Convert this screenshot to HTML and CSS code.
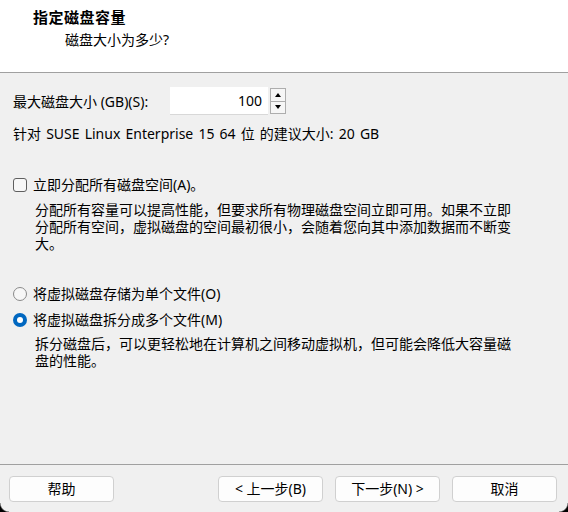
FILE: index.html
```html
<!DOCTYPE html>
<html lang="zh-CN">
<head>
<meta charset="utf-8">
<title>指定磁盘容量</title>
<link rel="stylesheet" href="styles.css">
</head>
<body>
<div class="window">
  <header class="header">
    <div class="title">指定磁盘容量</div>
    <div class="subtitle">磁盘大小为多少?</div>
  </header>
  <main class="content">
    <div class="size-row">
      <label class="size-label">最大磁盘大小 (GB)(S):</label>
      <div class="spin">
        <div class="spin-field">100</div>
        <div class="spin-buttons">
          <div class="spin-btn"><span class="tri up"></span></div>
          <div class="spin-btn"><span class="tri down"></span></div>
        </div>
      </div>
    </div>
    <div class="hint">针对 SUSE Linux Enterprise 15 64 位 的建议大小: 20 GB</div>

    <div class="option check-option">
      <span class="checkbox"></span>
      <span class="opt-text">立即分配所有磁盘空间(A)。</span>
    </div>
    <p class="desc">分配所有容量可以提高性能，但要求所有物理磁盘空间立即可用。如果不立即分配所有空间，虚拟磁盘的空间最初很小，会随着您向其中添加数据而不断变大。</p>

    <div class="option radio-first">
      <span class="radio"></span>
      <span class="opt-text">将虚拟磁盘存储为单个文件(O)</span>
    </div>
    <div class="option radio-second">
      <span class="radio checked"></span>
      <span class="opt-text">将虚拟磁盘拆分成多个文件(M)</span>
    </div>
    <p class="desc desc-split">拆分磁盘后，可以更轻松地在计算机之间移动虚拟机，但可能会降低大容量磁盘的性能。</p>
  </main>
  <footer class="footer">
    <button class="btn">帮助</button>
    <div class="nav">
      <button class="btn">&lt; 上一步(B)</button>
      <button class="btn">下一步(N) &gt;</button>
      <button class="btn cancel">取消</button>
    </div>
  </footer>
</div>
</body>
</html>
```
FILE: styles.css
```css
* { box-sizing: border-box; }
html, body {
  margin: 0;
  padding: 0;
}
body {
  width: 568px;
  height: 512px;
  overflow: hidden;
  background: #f0f0f0;
  font-family: "Noto Sans", "Noto Sans CJK SC", sans-serif;
  font-size: 14px;
  color: #000;
}
.window {
  position: relative;
  width: 568px;
  height: 512px;
  display: flex;
  flex-direction: column;
}
.window::before,
.window::after {
  content: "";
  position: absolute;
  bottom: 0;
  width: 9px;
  height: 9px;
}
.window::before {
  left: 0;
  background: radial-gradient(circle at 100% 0, transparent 8px, #000 9.5px);
}
.window::after {
  right: 0;
  background: radial-gradient(circle at 0 0, transparent 8px, #000 9.5px);
}
.header {
  background: #fff;
  height: 73px;
  border-bottom: 1px solid #a0a0a0;
  padding-top: 7px;
}
.title {
  margin-left: 33px;
  font-weight: bold;
  font-size: 15px;
  line-height: 20px;
  letter-spacing: 0.5px;
}
.subtitle {
  margin-left: 65px;
  margin-top: 3px;
  line-height: 20px;
}
.content {
  flex: 1;
  padding: 14px 13px 0 13px;
}
.size-row {
  display: flex;
  align-items: center;
  height: 28px;
}
.size-label {
  width: 157px;
  line-height: 17px;
}
.spin {
  display: flex;
  align-items: stretch;
  height: 28px;
}
.spin-field {
  width: 98px;
  background: #fff;
  border-bottom: 1px solid #d8d8d8;
  text-align: right;
  padding-right: 6px;
  line-height: 27px;
}
.spin-buttons {
  display: flex;
  flex-direction: column;
  width: 16px;
  margin-left: 2px;
  padding: 1px 0;
}
.spin-btn {
  flex: 1;
  border: 1px solid #adadad;
  background: #f6f6f6;
  display: flex;
  align-items: center;
  justify-content: center;
}
.spin-btn + .spin-btn { border-top: none; }
.tri {
  width: 0;
  height: 0;
  border-left: 3.5px solid transparent;
  border-right: 3.5px solid transparent;
}
.tri.up { border-bottom: 4px solid #000; }
.tri.down { border-top: 4px solid #000; }
.hint {
  margin-top: 10px;
  line-height: 17px;
  word-spacing: 1.5px;
}
.option {
  display: flex;
  align-items: center;
  line-height: 17px;
}
.check-option { margin-top: 34px; }
.checkbox {
  width: 14px;
  height: 14px;
  border: 1px solid #5f5f5f;
  border-radius: 3px;
  background: #f7f7f7;
  margin-right: 6px;
}
.radio {
  width: 14px;
  height: 14px;
  border: 1px solid #8a8a8a;
  border-radius: 50%;
  background: #f7f7f7;
  margin-right: 6px;
  position: relative;
}
.radio.checked {
  border: none;
  background: #0067c0;
}
.radio.checked::after {
  content: "";
  position: absolute;
  left: 4px;
  top: 4px;
  width: 6px;
  height: 6px;
  border-radius: 50%;
  background: #fff;
}
.desc {
  margin: 8px 0 0 22px;
  width: 482px;
  line-height: 17px;
  font-family: "Noto Sans CJK SC", sans-serif;
}
.desc-split { margin-top: 7px; }
.radio-first { margin-top: 33px; }
.radio-second { margin-top: 9px; }
.footer {
  height: 48px;
  border-top: 1px solid #a0a0a0;
  display: flex;
  justify-content: space-between;
  align-items: flex-start;
  padding: 11px 11px 0 9px;
}
.nav {
  display: flex;
  gap: 12px;
}
.btn {
  width: 105px;
  height: 26px;
  background: #fdfdfd;
  border: 1px solid #d0d0d0;
  border-radius: 4px;
  font-family: inherit;
  font-size: 14px;
  color: #000;
  padding: 0;
  line-height: 24px;
}
```
